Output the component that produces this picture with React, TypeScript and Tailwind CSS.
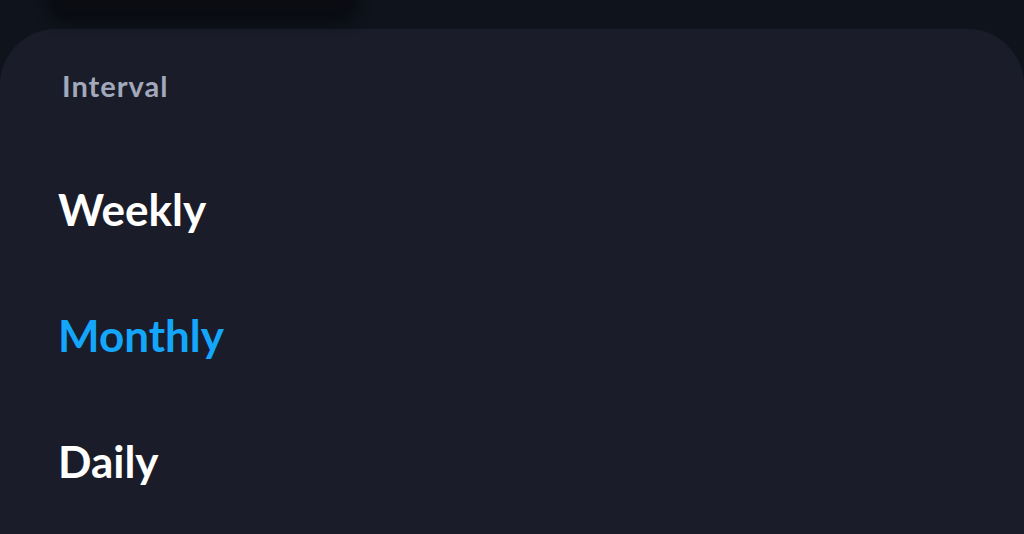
import React from "react";

const options = [
  { label: "Weekly", active: false },
  { label: "Monthly", active: true },
  { label: "Daily", active: false },
];

export default function App() {
  return (
    <div
      className="h-[534px] w-full overflow-hidden bg-[#0f131c] flex flex-col"
      style={{ fontFamily: 'Lato, "Open Sans", sans-serif' }}
    >
      {/* dimmed page behind the sheet */}
      <div className="h-[29px] shrink-0 relative">
        <div className="absolute left-[55px] top-[-20px] w-[296px] h-[32px] rounded-b-[12px] bg-[#0a0c11] shadow-[0_4px_14px_6px_rgba(8,10,14,0.9)]" />
      </div>

      {/* bottom sheet */}
      <div className="flex-1 rounded-t-[56px] bg-[#1a1d29] pl-[58px] pt-[41px]">
        <div className="ml-[4px] text-[29px] leading-[32px] font-bold tracking-[1px] text-[#a3a9bc]">
          Interval
        </div>
        <ul className="mt-[79px] flex flex-col gap-[70px]">
          {options.map((o) => (
            <li
              key={o.label}
              className={
                "text-[44px] leading-[56px] font-bold " +
                (o.active ? "text-[#13a6fb]" : "text-white")
              }
            >
              {o.label}
            </li>
          ))}
        </ul>
      </div>
    </div>
  );
}
